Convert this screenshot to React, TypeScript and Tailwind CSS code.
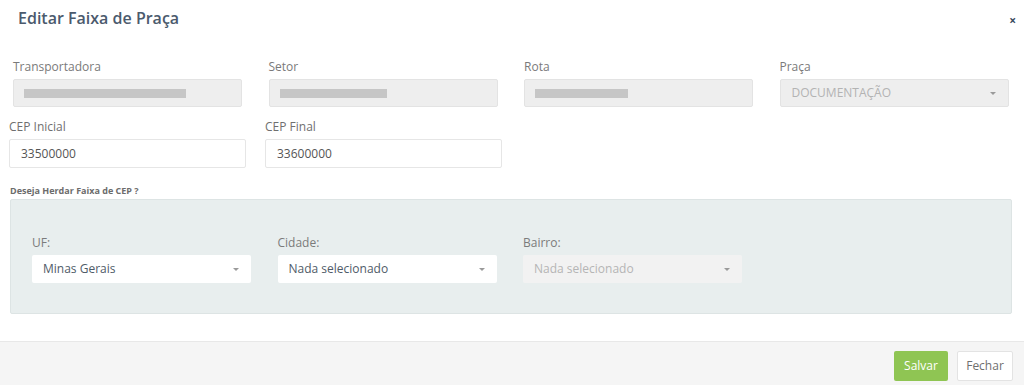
import React from "react";

const Caret = () => (
  <svg width="6" height="3" viewBox="0 0 6 3" className="shrink-0">
    <path d="M0 0 L6 0 L3 3 Z" fill="#9a9a9a" />
  </svg>
);

function DisabledInput({ bar }: { bar: number }) {
  return (
    <div className="h-[28px] w-[229px] rounded-[2px] border border-[#e3e3e3] bg-[#eeeeee] flex items-center pl-[10px]">
      <div className="h-[9px] bg-[#c6c6c6]" style={{ width: bar }} />
    </div>
  );
}

export default function App() {
  return (
    <div
      className="w-[1024px] h-[385px] bg-white flex flex-col overflow-hidden"
      style={{ fontFamily: '"Open Sans", "Liberation Sans", sans-serif' }}
    >
      <div className="flex items-start justify-between h-[48px] pl-[18px] pr-[8px] pt-[7px]">
        <div className="text-[16px] leading-[22px] font-semibold text-[#4b5a6d]">Editar Faixa de Praça</div>
        <div className="text-[12px] leading-[12px] font-bold text-[#3b4a5e] mt-[8px]">×</div>
      </div>

      <div className="flex gap-[26.5px] pl-[13px] mt-[11px]">
        {[
          ["Transportadora", 162],
          ["Setor", 107],
          ["Rota", 93],
        ].map(([l, b]) => (
          <div key={l as string} className="flex flex-col w-[229px]">
            <div className="text-[12px] leading-[16px] text-[#7a7a7a] h-[20px]">{l}</div>
            <DisabledInput bar={b as number} />
          </div>
        ))}
        <div className="flex flex-col w-[229px]">
          <div className="text-[12px] leading-[16px] text-[#7a7a7a] h-[20px]">Praça</div>
          <div className="h-[28px] w-[229px] rounded-[2px] border border-[#e3e3e3] bg-[#eeeeee] flex items-center justify-between pl-[11px] pr-[12px]">
            <span className="text-[12px] text-[#b3b3b3]">DOCUMENTAÇÃO</span>
            <Caret />
          </div>
        </div>
      </div>

      <div className="flex gap-[19px] pl-[9px] mt-[12px]">
        {[
          ["CEP Inicial", "33500000"],
          ["CEP Final", "33600000"],
        ].map(([l, v]) => (
          <div key={l} className="flex flex-col w-[237px]">
            <div className="text-[12px] leading-[16px] text-[#6f6f6f] h-[20px]">{l}</div>
            <div className="h-[29px] rounded-[2px] border border-[#e6e6e6] bg-white flex items-center pl-[11px] text-[12px] text-[#555]">
              {v}
            </div>
          </div>
        ))}
      </div>

      <div className="pl-[10px] mt-[17px] text-[9px] leading-[12px] font-bold text-[#6c6c6c]">Deseja Herdar Faixa de CEP ?</div>

      <div className="ml-[10px] w-[1002px] h-[115px] mt-[2px] rounded-[2px] border border-[#dde4e4] bg-[#e8eeee] flex gap-[26.5px] pl-[21px] pt-[35px]">
        {[
          ["UF:", "Minas Gerais", false],
          ["Cidade:", "Nada selecionado", false],
          ["Bairro:", "Nada selecionado", true],
        ].map(([l, v, d]) => (
          <div key={l as string} className="flex flex-col w-[219px]">
            <div className="text-[12px] leading-[16px] text-[#7b7b7b] h-[20px]">{l}</div>
            <div
              className={
                "h-[28px] rounded-[2px] flex items-center justify-between pl-[11px] pr-[12px] text-[12px] " +
                (d ? "bg-[#f2f2f2] text-[#b5b5b5]" : "bg-white text-[#4f5b68]")
              }
            >
              <span>{v}</span>
              <Caret />
            </div>
          </div>
        ))}
      </div>

      <div className="mt-[27px] flex-1 border-t border-[#e8e8e8] bg-[#f5f5f5] flex justify-end items-start gap-[9px] pr-[11px] pt-[9px]">
        <div className="h-[30px] w-[54px] rounded-[2px] bg-[#8fc553] text-white text-[12px] flex items-center justify-center">Salvar</div>
        <div className="h-[30px] w-[56px] rounded-[2px] bg-white border border-[#e3e3e3] text-[#6f6f6f] text-[12px] flex items-center justify-center">Fechar</div>
      </div>
    </div>
  );
}
